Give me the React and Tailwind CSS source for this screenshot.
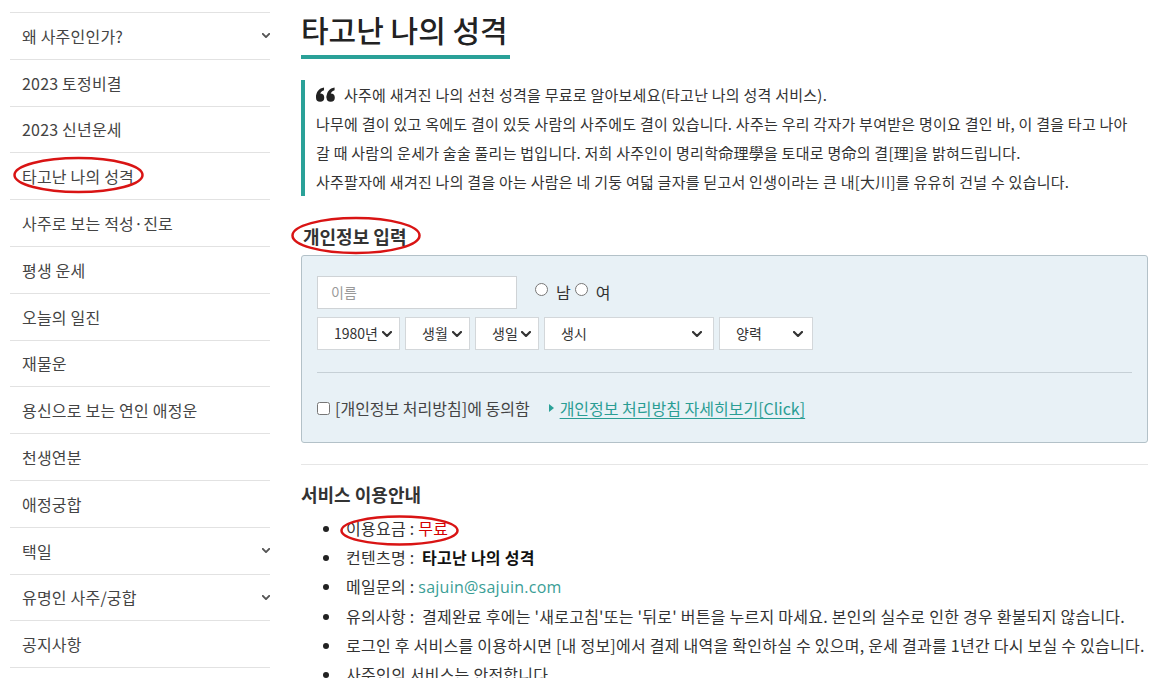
import React from "react";

const menu = [
  { label: "왜 사주인인가?", sub: true },
  { label: "2023 토정비결" },
  { label: "2023 신년운세" },
  { label: "타고난 나의 성격" },
  { label: "사주로 보는 적성·진로" },
  { label: "평생 운세" },
  { label: "오늘의 일진" },
  { label: "재물운" },
  { label: "용신으로 보는 연인 애정운" },
  { label: "천생연분" },
  { label: "애정궁합" },
  { label: "택일", sub: true },
  { label: "유명인 사주/궁합", sub: true },
  { label: "공지사항" },
];

const Chevron = ({ w = 10, h = 6, color = "#333", sw = 2 }) => (
  <svg width={w} height={h} viewBox="0 0 10 6" className="shrink-0">
    <polyline points="1,1 5,5 9,1" fill="none" stroke={color} strokeWidth={sw} strokeLinecap="round" strokeLinejoin="round" />
  </svg>
);

const QuoteIcon = () => (
  <svg width="19" height="15" viewBox="0 0 18 14" className="shrink-0">
    <g fill="#222">
      <circle cx="3.9" cy="10" r="3.9" />
      <path d="M0 10 C0 4.5 2.8 1.2 7.6 0.4 L7.6 2.9 C5.2 3.4 3.9 5.2 3.9 7.2 Z" />
      <circle cx="13.9" cy="10" r="3.9" />
      <path d="M10 10 C10 4.5 12.8 1.2 17.6 0.4 L17.6 2.9 C15.2 3.4 13.9 5.2 13.9 7.2 Z" />
    </g>
  </svg>
);

const SelectBox = ({ label, width, pr = "pr-[7px]" }) => (
  <div
    className={`flex items-center justify-between h-[33px] bg-white border border-[#d3d7da] pl-[16px] ${pr} text-[14px] text-[#333] whitespace-nowrap`}
    style={{ width }}
  >
    <span>{label}</span>
    <Chevron w={10} h={6} sw={2.2} />
  </div>
);

const Bullet = ({ children }) => (
  <li className="flex items-center">
    <span className="ml-[22px] mr-[17px] w-[6px] h-[6px] rounded-full bg-[#222] shrink-0" />
    <span>{children}</span>
  </li>
);

const App = () => {
  return (
    <div
      className="relative w-full h-[678px] overflow-hidden bg-white text-[#333]"
      style={{ fontFamily: '"Noto Sans CJK KR", "Noto Sans", sans-serif' }}
    >
      <div className="flex">
        {/* sidebar */}
        <aside className="ml-[10px] mt-[12px] w-[260px] shrink-0 border-t border-[#e2e2e2]">
          {menu.map((item) => (
            <div
              key={item.label}
              className="flex items-center justify-between h-[46.8px] border-b border-[#e2e2e2] pl-[12px] pr-0 text-[16px] tracking-[0.2px] text-[#444]"
            >
              <span>{item.label}</span>
              {item.sub && <Chevron w={8} h={5} color="#555" sw={2.4} />}
            </div>
          ))}
        </aside>

        {/* main */}
        <main className="ml-[31px] w-[847px] shrink-0">
          <h1 className="inline-block mt-[9px] pb-[6px] pr-[2px] border-b-4 border-[#2aa198] text-[30px] leading-[40px] font-medium text-[#222]">
            타고난 나의 성격
          </h1>

          <div className="mt-[21px] border-l-4 border-[#2aa198] pl-[11px] text-[15px] tracking-[0.25px] leading-[29px] text-[#333] whitespace-nowrap">
            <div className="flex items-center gap-[9px]">
              <QuoteIcon />
              <span>사주에 새겨진 나의 선천 성격을 무료로 알아보세요(타고난 나의 성격 서비스).</span>
            </div>
            <div>나무에 결이 있고 옥에도 결이 있듯 사람의 사주에도 결이 있습니다. 사주는 우리 각자가 부여받은 명이요 결인 바, 이 결을 타고 나아</div>
            <div>갈 때 사람의 운세가 술술 풀리는 법입니다. 저희 사주인이 명리학命理學을 토대로 명命의 결[理]을 밝혀드립니다.</div>
            <div>사주팔자에 새겨진 나의 결을 아는 사람은 네 기둥 여덟 글자를 딛고서 인생이라는 큰 내[大川]를 유유히 건널 수 있습니다.</div>
          </div>

          <h2 className="mt-[28px] ml-[2px] text-[18px] leading-[24px] font-bold text-[#333]">개인정보 입력</h2>

          <div className="mt-[7px] rounded-[3px] border border-[#b3c1c8] bg-[#e8f1f6] px-[15px] pt-[20px] pb-[22px]">
            <div className="flex items-start">
              <div className="w-[200px] h-[33px] bg-white border border-[#cfd3d6] flex items-center pl-[13px] text-[14px] text-[#999]">
                이름
              </div>
              <label className="ml-[18px] mt-[4px] flex items-center text-[16px] text-[#333]">
                <input type="radio" name="sex" className="w-[13px] h-[13px] m-0 mr-[8px] -mt-[6px]" />
                남
              </label>
              <label className="ml-[4px] mt-[4px] flex items-center text-[16px] text-[#333]">
                <input type="radio" name="sex" className="w-[13px] h-[13px] m-0 mr-[8px] -mt-[6px]" />
                여
              </label>
            </div>

            <div className="mt-[8px] flex gap-[5px]">
              <SelectBox label="1980년" width={83} />
              <SelectBox label="생월" width={65} />
              <SelectBox label="생일" width={64} />
              <SelectBox label="생시" width={170} pr="pr-[11px]" />
              <SelectBox label="양력" width={94} pr="pr-[9px]" />
            </div>

            <div className="mt-[22px] border-t border-[#c6d0d6]" />

            <div className="mt-[23px] h-[24px] flex items-center text-[16px]">
              <input type="checkbox" className="w-[13px] h-[13px] m-0 mr-[5px]" />
              <span className="text-[#444]">[개인정보 처리방침]에 동의함</span>
              <span className="ml-[19px] mr-[6px] w-0 h-0 border-y-[4px] border-y-transparent border-l-[5px] border-l-[#2aa198]" />
              <a className="text-[#2a9d94] underline underline-offset-[3px]">개인정보 처리방침 자세히보기[Click]</a>
            </div>
          </div>

          <div className="mt-[21px] border-t border-[#e6e6e6]" />

          <h3 className="mt-[17px] text-[18px] leading-[24px] font-semibold text-[#333]">서비스 이용안내</h3>

          <ul className="mt-[8px] text-[16px] tracking-[0.25px] leading-[29px] text-[#333] whitespace-nowrap">
            <Bullet>
              이용요금 : <span className="text-[#d40000]">무료</span>
            </Bullet>
            <Bullet>
              컨텐츠명 :&nbsp; <b className="font-bold text-[#111]">타고난 나의 성격</b>
            </Bullet>
            <Bullet>
              메일문의 :{" "}
              <span className="text-[#3a9e96]" style={{ fontFamily: '"Open Sans", "Noto Sans", sans-serif' }}>
                sajuin@sajuin.com
              </span>
            </Bullet>
            <Bullet>유의사항 :&nbsp; 결제완료 후에는 '새로고침'또는 '뒤로' 버튼을 누르지 마세요. 본인의 실수로 인한 경우 환불되지 않습니다.</Bullet>
            <Bullet>로그인 후 서비스를 이용하시면 [내 정보]에서 결제 내역을 확인하실 수 있으며, 운세 결과를 1년간 다시 보실 수 있습니다.</Bullet>
            <Bullet>사주인의 서비스는 안전합니다</Bullet>
          </ul>
        </main>
      </div>

      {/* red annotation marks */}
      <svg className="absolute inset-0 pointer-events-none" width="1155" height="678">
        <g fill="none" stroke="#d91414" strokeWidth="2.5">
          <ellipse cx="78.5" cy="175" rx="64" ry="17" />
          <ellipse cx="356" cy="235.5" rx="63.5" ry="17.5" />
          <ellipse cx="399.5" cy="530.5" rx="58" ry="14" />
        </g>
      </svg>
    </div>
  );
};

export default App;
